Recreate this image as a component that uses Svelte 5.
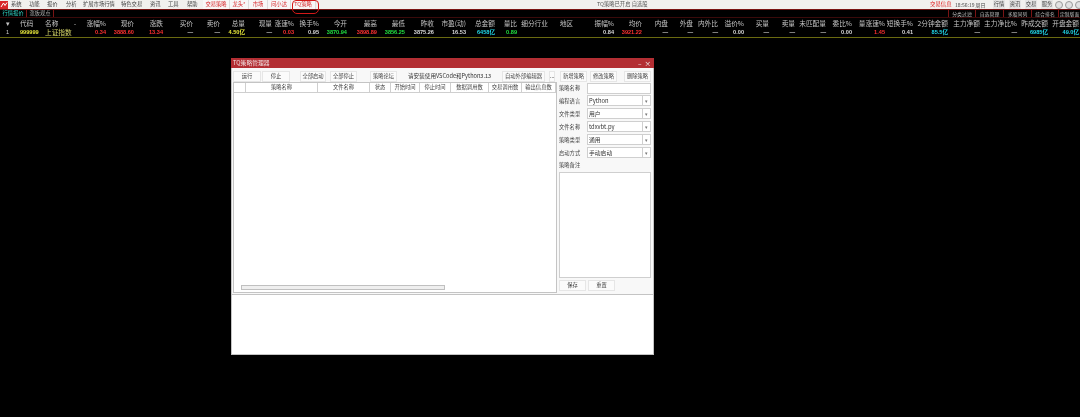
<script>
  const menus = [
    { t: '系统', l: 11 }, { t: '功能', l: 29 }, { t: '报价', l: 47 }, { t: '分析', l: 66 },
    { t: '扩展市场行情', l: 83 }, { t: '特色交易', l: 121 }, { t: '资讯', l: 150 }, { t: '工具', l: 168 }, { t: '帮助', l: 187 }
  ];
  const redMenus = [
    { t: '交易策略', w: 27 }, { t: '龙头', w: 19, star: true }, { t: '市场', w: 19 },
    { t: '问小达', w: 23 }, { t: 'TQ策略', w: 25 }
  ];
  const cols = [
    ['代码', 41, '999999', 'code', 'l'], ['名称', 74, '上证指数', 'name', 'l'],
    ['涨幅%', 106, '0.34', 'red'], ['现价', 134, '3888.60', 'red'], ['涨跌', 163, '13.34', 'red'],
    ['买价', 193, '—', 'w'], ['卖价', 220, '—', 'w'], ['总量', 245, '4.50亿', 'yel'], ['现量', 272, '—', 'w'],
    ['涨速%', 294, '0.03', 'red'], ['换手%', 319, '0.95', 'w'], ['今开', 347, '3870.94', 'grn'],
    ['最高', 377, '3898.89', 'red'], ['最低', 405, '3856.25', 'grn'], ['昨收', 434, '3875.26', 'w'],
    ['市盈(动)', 466, '16.53', 'w'], ['总金额', 495, '6458亿', 'cy'], ['量比', 517, '0.89', 'grn'],
    ['细分行业', 548, '', 'w'], ['地区', 573, '', 'w'], ['振幅%', 614, '0.84', 'w'], ['均价', 642, '3921.22', 'red'],
    ['内盘', 668, '—', 'w'], ['外盘', 693, '—', 'w'], ['内外比', 718, '—', 'w'], ['溢价%', 744, '0.00', 'w'],
    ['买量', 769, '—', 'w'], ['卖量', 795, '—', 'w'], ['未匹配量', 826, '—', 'w'], ['委比%', 852, '0.00', 'w'],
    ['量涨速%', 885, '1.45', 'red'], ['短换手%', 913, '0.41', 'w'], ['2分钟金额', 948, '85.5亿', 'cy'],
    ['主力净额', 980, '—', 'w'], ['主力净比%', 1017, '—', 'w'], ['昨成交额', 1048, '6985亿', 'cy'], ['开盘金额', 1079, '49.0亿', 'cy']
  ];
  const widths = cols.map((c, i) => c[1] - (i ? cols[i - 1][1] : 12));
  const sideTabs = [['分类过滤', 27], ['自选管理', 28], ['多股同列', 28], ['综合排名', 27], ['定制版面', 22]];
  const tools = [
    ['运行', 28, 1], ['停止', 28, 1], ['全部启动', 26, 10], ['全部停止', 27, 4], ['策略论坛', 27, 13]
  ];
  const tableCols = [['', 12], ['策略名称', 72], ['文件名称', 52], ['状态', 21], ['开始时间', 29], ['停止时间', 31], ['数据调用数', 38], ['交易调用数', 33], ['输出信息数', 34]];
  const selects = [['编程语言', 'Python'], ['文件类型', '用户'], ['文件名称', 'tdxvbt.py'], ['策略类型', '通用'], ['启动方式', '手动启动']];
</script>

<div class="screen">
  <div class="menubar">
    <svg class="logo" width="8" height="8" viewBox="0 0 8 8"><rect width="8" height="8" fill="#d8262a" /><path d="M1 6 L3.5 2 L5 4.5 L7 1.5" stroke="#fff" fill="none" stroke-width="1" /></svg>
    <div class="menus">
      {#each menus as m, i}
        <span class="mi" style="width:{(i + 1 < menus.length ? menus[i + 1].l : 203) - m.l}px">{m.t}</span>
      {/each}
    </div>
    <div class="redmenus">
      {#each redMenus as m}
        <span class="rmi" style="width:{m.w}px">{m.t}{#if m.star}<b>*</b>{/if}</span>
      {/each}
    </div>
    <span class="status">TQ策略已开启 自选股</span>
    <div class="rightgroup">
      <span class="trade">交易信息</span>
      <span class="clock">18:56:19 周日</span>
      <div class="modes">
        <span>行情</span><span>资讯</span><span>交易</span><span>服务</span>
      </div>
      <div class="winbtns"><i></i><i></i><i></i></div>
    </div>
  </div>
  <div class="oval"></div>

  <div class="tabbar">
    <span class="tab active">行情报价</span>
    <span class="tab">涨板观点</span>
    <div class="sidetabs">
      {#each sideTabs as s}<span style="width:{s[1]}px">{s[0]}</span>{/each}
    </div>
  </div>

  <div class="qrow head">
    <span class="arrow">▾</span>
    {#each cols as c, i}
      <span class="cell" class:left={c[4]} style="width:{widths[i]}px">{c[0]}{#if i === 1}<em>•</em>{/if}</span>
    {/each}
  </div>
  <div class="qrow data">
    <span class="arrow num">1</span>
    {#each cols as c, i}
      <span class="cell {c[3]}" class:left={c[4]} style="width:{widths[i]}px">{c[2]}</span>
    {/each}
  </div>

  <div class="window">
    <div class="title"><span>TQ策略管理器</span><span class="wc">–&nbsp;&nbsp;×</span></div>
    <div class="toolbar">
      {#each tools as t}
        <button style="width:{t[1]}px;margin-left:{t[2]}px">{t[0]}</button>
      {/each}
      <span class="notice">请安装使用VSCode和Python3.13</span>
      <button class="ext">自动外部编辑器</button>
      <button class="dots">...</button>
      <button class="act first">新增策略</button>
      <button class="act">修改策略</button>
      <button class="act last">删除策略</button>
    </div>
    <div class="main">
      <div class="table">
        <div class="thead">
          {#each tableCols as c}<span style="width:{c[1]}px">{c[0]}</span>{/each}
        </div>
        <div class="tbody"><div class="scroll"></div></div>
      </div>
      <div class="form">
        <div class="frow first"><label>策略名称</label><div class="input"></div></div>
        {#each selects as s}
          <div class="frow"><label>{s[0]}</label><div class="input sel"><span>{s[1]}</span><i>▾</i></div></div>
        {/each}
        <div class="notes">策略备注</div>
        <div class="area"></div>
        <div class="formbtns"><button>保存</button><button>重置</button></div>
      </div>
    </div>
    <div class="log"></div>
  </div>
</div>

<style>
  :global(body) { margin: 0; background: #000; }
  .screen {
    position: relative; width: 1080px; height: 417px; overflow: hidden; background: #000;
    font-family: "Noto Sans CJK SC", "Liberation Sans", sans-serif; font-size: 5.3px; color: #ccc;
    filter: blur(0.3px);
  }
  .menubar {
    height: 9px; background: #f1f0ee; display: flex; align-items: center; color: #444;
    position: relative; line-height: 9px;
  }
  .logo { flex: none; margin-right: 3px; }
  .menus { display: flex; }
  .mi { display: block; white-space: nowrap; }
  .redmenus { display: flex; color: #d8262a; }
  .rmi { display: block; text-align: center; border-right: 1px solid #dcdcdc; box-sizing: border-box; white-space: nowrap; background: #f7f7f7; }
  .rmi b { font-weight: 400; }
  .status { margin-left: 281px; color: #555; white-space: nowrap; }
  .rightgroup { position: absolute; left: 930px; top: 0; display: flex; align-items: center; height: 9px; width: 150px; }
  .trade { color: #e02020; width: 25px; white-space: nowrap; font-size: 5.4px; flex: none; }
  .clock { width: 38px; white-space: nowrap; color: #444; flex: none; font-size: 5px; }
  .modes { display: flex; gap: 4px; flex: none; }
  .modes span { width: 12px; text-align: center; white-space: nowrap; background: #e4e4e4; }
  .winbtns { display: flex; gap: 2px; margin-left: 2px; }
  .winbtns i { width: 8px; height: 8px; border-radius: 50%; background: #e2e2e2; border: 1px solid #999; box-sizing: border-box; flex: none; }
  .oval { position: absolute; left: 292px; top: 0; width: 27px; height: 14px; border: 1px solid #d41818; border-radius: 0 0 5px 5px / 0 0 5px 5px; box-sizing: border-box; border-top-left-radius: 4px; border-top-right-radius: 4px; }

  .tabbar {
    display: flex; border-top: 1px solid #7a1414; border-bottom: 1px solid #3a0a0a;
    line-height: 7px; height: 7px; align-items: center;
  }
  .tab { width: 26px; text-align: center; border-right: 1px solid #7a1414; color: #aaa; white-space: nowrap; height: 7px; box-sizing: content-box; }
  .tab.active { color: #2fd0c0; }
  .sidetabs { margin-left: auto; display: flex; }
  .sidetabs span { border-left: 1px solid #7a1414; text-align: center; box-sizing: border-box; white-space: nowrap; height: 7px; color: #bbb; font-size: 4.9px; }

  .qrow { display: flex; height: 9px; line-height: 9px; white-space: nowrap; }
  .qrow.head { font-size: 6.7px; color: #c4c4c4; margin-top: 1px; }
  .qrow.data { font-size: 5.6px; font-weight: 700; font-family: "Liberation Sans", "Noto Sans CJK SC", sans-serif; border-bottom: 1px solid #6a6a10; }
  .arrow { width: 12px; flex: none; padding-left: 6px; box-sizing: border-box; text-align: left; overflow: hidden; }
  .arrow.num { color: #ccc; font-weight: 400; }
  .cell { flex: none; box-sizing: border-box; text-align: right; }
  .cell.left { text-align: left; padding-left: 8px; }
  .cell em { font-style: normal; margin-left: 14px; font-size: 5px; }
  .qrow .cell:nth-child(3) { padding-left: 4px; }
  .code { color: #e4e43a; }
  .name { color: #d8d86a; font-family: "Noto Sans CJK SC", sans-serif; font-weight: 400; font-size: 6.7px; }
  .red { color: #ff3030; }
  .w { color: #d8d8d8; }
  .grn { color: #20e040; }
  .yel { color: #e8e83a; }
  .cy { color: #20d8e8; }

  .window {
    position: absolute; left: 231px; top: 58px; width: 423px; height: 297px; background: #f8f8f8;
    display: flex; flex-direction: column; color: #444; box-sizing: border-box;
    border: 1px solid #c4c4c4; border-top: 0;
  }
  .title {
    height: 10px; flex: none; background: #b32e33; color: #f0e0e0; display: flex; justify-content: space-between;
    align-items: center; padding: 0 2px; font-size: 5.8px; margin: 0 -1px; line-height: 10px;
  }
  .wc { color: #eee; font-size: 6.5px; margin-right: 1px; }
  button {
    font: inherit; color: #444; background: #fbfbfb; border: 1px solid #e6e6e6; padding: 0; height: 11px;
    line-height: 9px; white-space: nowrap; box-sizing: border-box; flex: none;
  }
  .toolbar { display: flex; height: 14px; flex: none; align-items: flex-start; padding-top: 3px; box-sizing: border-box; }
  .notice { width: 94px; margin-left: 11px; white-space: nowrap; flex: none; color: #333; font-size: 5.6px; line-height: 11px; }
  .ext { width: 43px; }
  .dots { width: 6px; margin-left: 4px; }
  .act { width: 27px; margin-left: 3px; }
  .act.first { margin-left: 5px; }
  .act.last { margin-left: 7px; }
  .main { display: flex; height: 211px; flex: none; }
  .table {
    width: 324px; margin-left: 1px; background: #fff; border: 1px solid #c4c4c4; box-sizing: border-box;
    display: flex; flex-direction: column; flex: none;
  }
  .thead { display: flex; height: 9px; border-bottom: 1px solid #cfcfcf; flex: none; line-height: 8px; box-sizing: content-box; }
  .thead span { border-right: 1px solid #cfcfcf; box-sizing: border-box; text-align: center; white-space: nowrap; background: #fff; flex: none; }
  .tbody { flex: 1; display: flex; align-items: flex-end; padding: 0 0 2px 7px; }
  .scroll { width: 204px; height: 5px; background: #efefef; border: 1px solid #c0c0c0; box-sizing: border-box; }
  .form { flex: 1; padding: 0 2px 0 2px; display: flex; flex-direction: column; }
  .frow { display: flex; height: 13px; align-items: center; flex: none; }
  .frow.first { height: 12px; }
  .frow label { width: 28px; white-space: nowrap; flex: none; }
  .input {
    width: 64px; height: 11px; background: #fff; border: 1px solid #cfcfcf; box-sizing: border-box; display: flex;
    align-items: center; line-height: 9px; flex: none;
  }
  .sel span { flex: 1; padding-left: 1px; color: #333; font-size: 5.8px; }
  .sel i { width: 8px; height: 100%; border-left: 1px solid #cfcfcf; font-style: normal; text-align: center; font-size: 5px; color: #777; box-sizing: border-box; }
  .notes { height: 13px; line-height: 13px; flex: none; }
  .area { width: 92px; height: 106px; background: #fff; border: 1px solid #cfcfcf; box-sizing: border-box; flex: none; }
  .formbtns { display: flex; gap: 2px; margin-top: 2px; }
  .formbtns button { width: 27px; }
  .log { flex: 1; background: #fff; border-top: 1px solid #c4c4c4; margin-top: 1px; }
</style>
